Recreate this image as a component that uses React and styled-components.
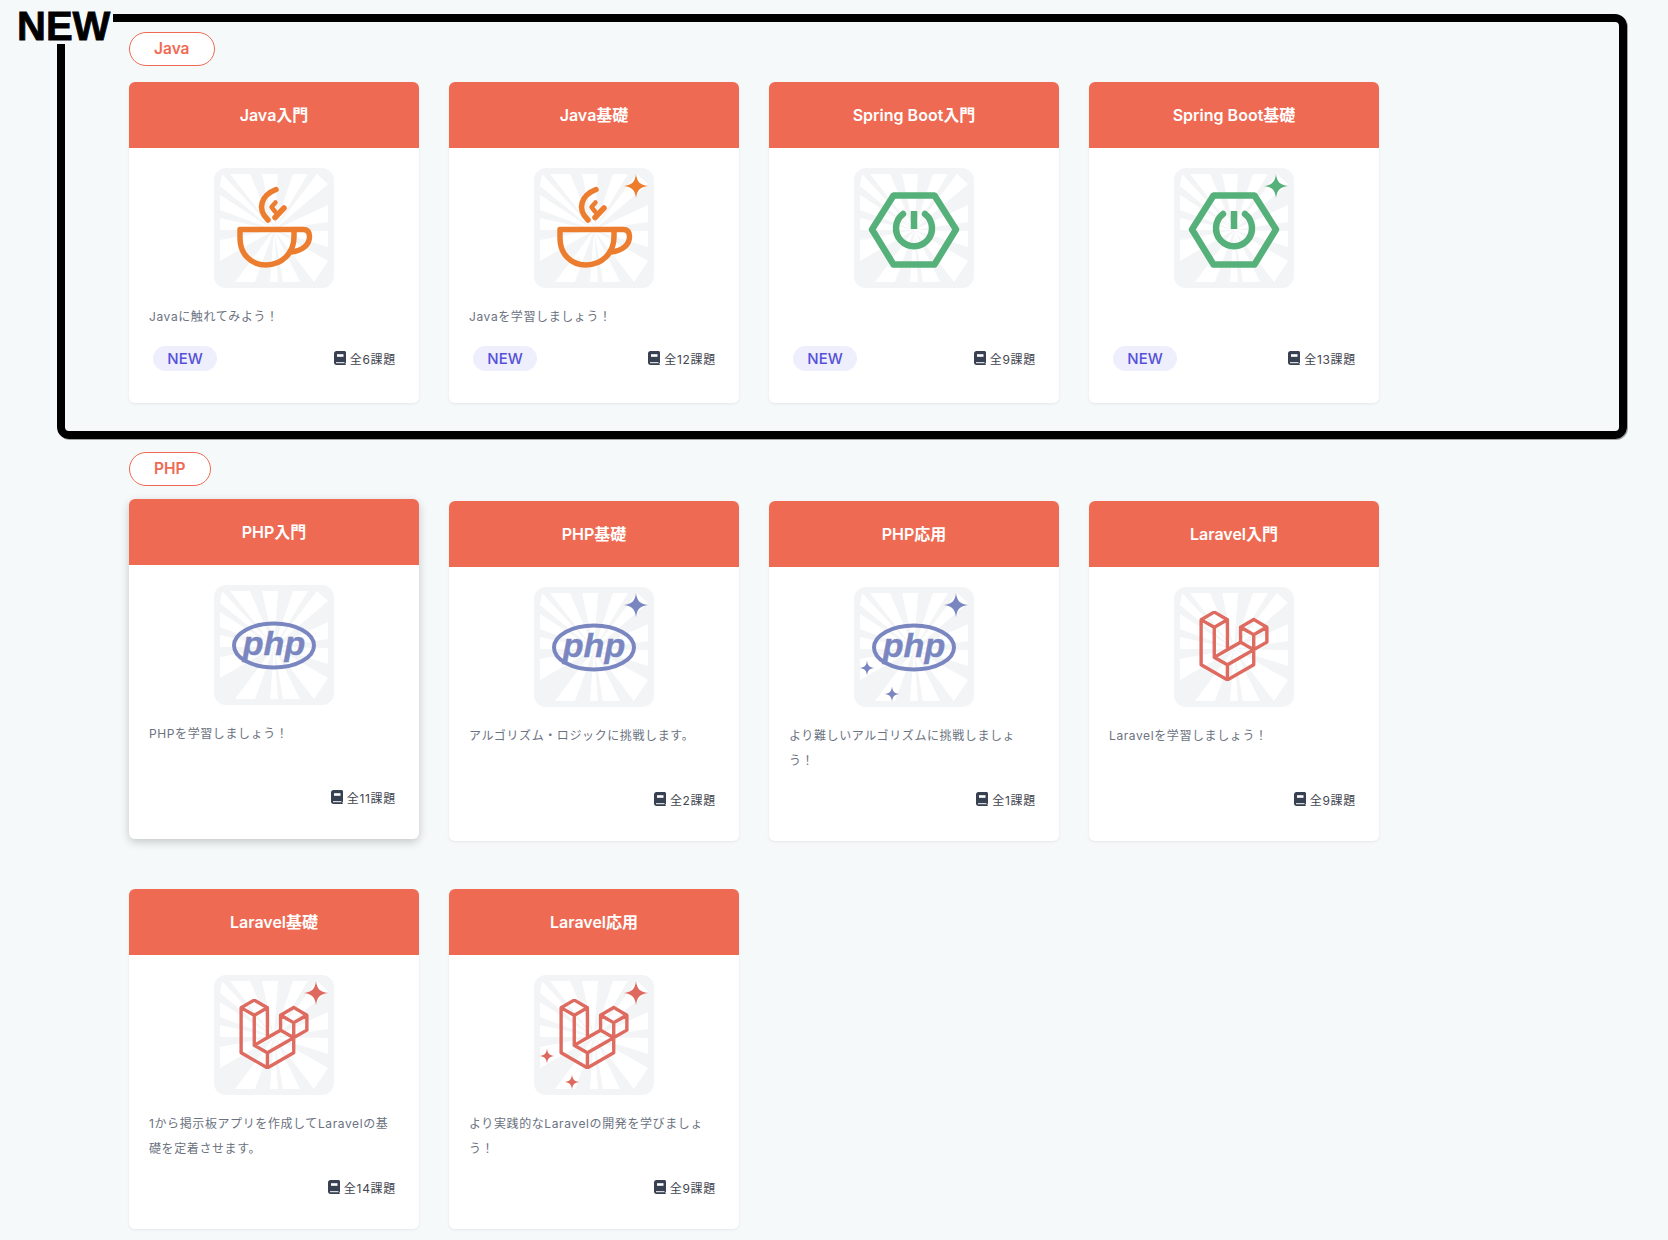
import React from 'react';
import styled, { createGlobalStyle } from 'styled-components';
import { SiLaravel } from 'react-icons/si';

const GlobalStyle = createGlobalStyle`
  body {
    margin: 0;
    background: #f5f9fa;
    font-family: Inter, "Noto Sans CJK JP", sans-serif;
  }
`;

const JAVA = '#ed7d2e';
const SPRING = '#55b07a';
const PHP = '#7a86c0';
const LARAVEL = '#de6a5f';

// white rays of the icon background: [x, y] pairs on the inner square edge
const RAYS = [
  [[16, 6], [36, 6]],
  [[48, 6], [64, 6]],
  [[79, 6], [94, 6]],
  [[103, 6], [114, 16]],
  [[114, 37], [114, 54]],
  [[114, 63], [114, 79]],
  [[114, 93], [100, 114]],
  [[86, 114], [69, 114]],
  [[64, 114], [56, 114]],
  [[41, 114], [21, 114]],
  [[6, 93], [6, 72]],
  [[6, 62], [6, 50]],
  [[6, 42], [6, 27]],
  [[6, 18], [8, 6]],
];

const Sparkle = ({ x, y, r }) => (
  <path
    transform={`translate(${x} ${y}) scale(${r / 12})`}
    d="M0-12C1-4 4-1 12 0 4 1 1 4 0 12-1 4-4 1-12 0-4-1-1-4 0-12Z"
  />
);

const JavaMark = () => (
  <g fill="none" stroke={JAVA} strokeWidth="5.500" strokeLinecap="round" strokeLinejoin="round">
    <path d="M26 61.500H80V68.500C80 85 68 97 52 97 36 97 26 85 26 70.500Z" />
    <path d="M80 61.500H89C94 61.500 95.500 64.500 95.500 68.500 95.500 77 88 83 76 84" />
    <path d="M62 21.500C48 27 42 40 54 52" />
    <path d="M61.500 34.500 57.500 39 61 43.500" strokeWidth="4.500" />
    <path d="M70 40 61 49.500" />
  </g>
);

const SpringMark = () => (
  <g fill="none" stroke={SPRING} strokeWidth="6.500" strokeLinejoin="round">
    <path d="M18 61.500 39.500 27.500H80.500L102 61.500 80.500 96.500H39.500Z" />
    <path d="M49 46A18 18 0 1 0 71 46" strokeLinecap="round" />
    <path d="M60 43V61" />
  </g>
);

const PhpMark = () => (
  <g>
    <ellipse cx="60" cy="60.500" rx="40" ry="22" fill="none" stroke={PHP} strokeWidth="4" />
    <LogoWord x="60" y="69.500" textAnchor="middle" fill={PHP} stroke={PHP} strokeWidth="0.4">
      php
    </LogoWord>
  </g>
);

const LaravelMark = () => (
  <SiLaravel x="25" y="24" size="70" color={LARAVEL} stroke={LARAVEL} strokeWidth="0.4" />
);

const MARKS = {
  java: { color: JAVA, Mark: JavaMark },
  spring: { color: SPRING, Mark: SpringMark },
  php: { color: PHP, Mark: PhpMark },
  laravel: { color: LARAVEL, Mark: LaravelMark },
};

const CourseIcon = ({ kind, sparkles, id }) => {
  const { color, Mark } = MARKS[kind];
  return (
    <IconArt viewBox="0 0 120 120">
      <clipPath id={id}>
        <rect x="6" y="6" width="108" height="108" rx="6" />
      </clipPath>
      <rect width="120" height="120" rx="12" fill="#f3f4f6" />
      <g clipPath={`url(#${id})`} fill="#fff">
        {RAYS.map(([a, b], i) => (
          <polygon key={i} points={`60,62 ${a[0]},${a[1]} ${b[0]},${b[1]}`} />
        ))}
      </g>
      <Mark />
      <g fill={color}>
        {sparkles > 0 && <Sparkle x={102} y={18} r={12} />}
        {sparkles > 1 && <Sparkle x={13} y={81} r={7.500} />}
        {sparkles > 1 && <Sparkle x={38} y={107} r={7.500} />}
      </g>
    </IconArt>
  );
};

const BookIcon = () => (
  <BookSvg viewBox="0 0 12 14">
    <path d="M2.500 0H10.500C11.300 0 12 .7 12 1.500V11.500C12 12 11.700 12.300 11.300 12.400V13.200H11.500C11.800 13.200 12 13.400 12 13.600 12 13.800 11.800 14 11.500 14H2.500C1.100 14 0 12.900 0 11.500V2.500C0 1.100 1.100 0 2.500 0Z" fill="#374151" />
    <rect x="3" y="3.200" width="6.500" height="2.600" fill="#fff" />
    <rect x="2" y="11.200" width="8.500" height="1" fill="#fff" />
  </BookSvg>
);

const Course = ({ course, id }) => (
  <Card $lifted={course.lifted}>
    <CardHeader>{course.title}</CardHeader>
    <CardBody>
      <IconBox>
        <CourseIcon kind={course.kind} sparkles={course.sparkles} id={id} />
      </IconBox>
      <Description>{course.text}</Description>
      <CardFooter>
        {course.isNew ? <NewBadge>NEW</NewBadge> : <span />}
        <Count>
          <BookIcon />
          {course.count}
        </Count>
      </CardFooter>
    </CardBody>
  </Card>
);

const javaCourses = [
  { title: 'Java入門', kind: 'java', sparkles: 0, text: 'Javaに触れてみよう！', count: '全6課題', isNew: true },
  { title: 'Java基礎', kind: 'java', sparkles: 1, text: 'Javaを学習しましょう！', count: '全12課題', isNew: true },
  { title: 'Spring Boot入門', kind: 'spring', sparkles: 0, text: '', count: '全9課題', isNew: true },
  { title: 'Spring Boot基礎', kind: 'spring', sparkles: 1, text: '', count: '全13課題', isNew: true },
];

const phpCourses = [
  { title: 'PHP入門', kind: 'php', sparkles: 0, text: 'PHPを学習しましょう！', count: '全11課題', lifted: true },
  { title: 'PHP基礎', kind: 'php', sparkles: 1, text: 'アルゴリズム・ロジックに挑戦します。', count: '全2課題' },
  { title: 'PHP応用', kind: 'php', sparkles: 3, text: 'より難しいアルゴリズムに挑戦しましょう！', count: '全1課題' },
  { title: 'Laravel入門', kind: 'laravel', sparkles: 0, text: 'Laravelを学習しましょう！', count: '全9課題' },
  { title: 'Laravel基礎', kind: 'laravel', sparkles: 1, text: '1から掲示板アプリを作成してLaravelの基礎を定着させます。', count: '全14課題' },
  { title: 'Laravel応用', kind: 'laravel', sparkles: 3, text: 'より実践的なLaravelの開発を学びましょう！', count: '全9課題' },
];

const App = () => (
  <Page>
    <GlobalStyle />
    <Highlight>
      <HighlightLabel>NEW</HighlightLabel>
      <CategoryPill>Java</CategoryPill>
      <CourseGrid>
        {javaCourses.map((c, i) => (
          <Course key={c.title} course={c} id={`java-${i}`} />
        ))}
      </CourseGrid>
    </Highlight>
    <Section>
      <CategoryPill $tight>PHP</CategoryPill>
      <CourseGrid>
        {phpCourses.map((c, i) => (
          <Course key={c.title} course={c} id={`php-${i}`} />
        ))}
      </CourseGrid>
    </Section>
  </Page>
);

const Page = styled.div`
  padding-top: 14px;
  min-height: 1226px;
  box-sizing: content-box;
`;

const Highlight = styled.section`
  position: relative;
  box-sizing: border-box;
  width: 1570px;
  margin-left: 57px;
  padding: 10px 0 28px 64px;
  border: 8px solid #000;
  border-radius: 12px;
  box-shadow: 1px 1px 0 rgba(0, 0, 0, 0.35);
`;

const HighlightLabel = styled.div`
  position: absolute;
  left: -51px;
  top: -14px;
  padding: 0 3px;
  background: #f5f9fa;
  color: #000;
  font-family: "Liberation Sans", Arial, sans-serif;
  font-size: 40px;
  font-weight: 700;
  line-height: 36px;
  -webkit-text-stroke: 0.8px #000;
  text-shadow: 0 0 2px #fff, 1px 1px 1px #fff, -1px -1px 1px #fff;
`;

const Section = styled.section`
  margin: 13px 0 0 129px;
`;

const CategoryPill = styled.div`
  display: inline-block;
  vertical-align: top;
  height: 34px;
  box-sizing: border-box;
  padding: 0 24px;
  margin-bottom: ${(p) => (p.$tight ? '15px' : '16px')};
  border: 1px solid #ef6a52;
  border-radius: 17px;
  background: #fff;
  color: #ef6a52;
  font-size: 15.500px;
  font-weight: 600;
  line-height: 32px;
`;

const CourseGrid = styled.div`
  display: grid;
  grid-template-columns: repeat(4, 290px);
  column-gap: 30px;
  row-gap: 48px;
`;

const Card = styled.article`
  display: flex;
  flex-direction: column;
  background: #fff;
  border-radius: 6px;
  overflow: hidden;
  box-shadow: ${(p) =>
    p.$lifted ? '0 3px 10px rgba(0, 0, 0, 0.2)' : '0 1px 3px rgba(0, 0, 0, 0.07)'};
  transform: ${(p) => (p.$lifted ? 'translateY(-2px)' : 'none')};
`;

const CardHeader = styled.h3`
  margin: 0;
  height: 66px;
  background: #ee6a53;
  color: #fff;
  font-size: 16px;
  font-weight: 600;
  line-height: 66px;
  text-align: center;
`;

const CardBody = styled.div`
  flex: 1;
  display: flex;
  flex-direction: column;
  padding: 20px 20px 32px;
`;

const IconBox = styled.div`
  width: 120px;
  height: 120px;
  margin: 0 auto;
`;

const IconArt = styled.svg`
  display: block;
  width: 120px;
  height: 120px;
`;

const LogoWord = styled.text`
  font-family: "Liberation Sans", Arial, sans-serif;
  font-size: 34px;
  font-style: italic;
  font-weight: 700;
`;

const Description = styled.p`
  margin: 16px 0 0;
  max-width: 240px;
  min-height: 25.500px;
  color: #6b7280;
  font-size: 12px;
  letter-spacing: 0.6px;
  line-height: 25.500px;
`;

const CardFooter = styled.div`
  display: flex;
  align-items: center;
  justify-content: space-between;
  margin-top: auto;
  padding: 16px 4px 0;
`;

const NewBadge = styled.span`
  width: 64px;
  height: 25px;
  border-radius: 13px;
  background: #eeeefc;
  color: #5551d8;
  font-size: 15px;
  font-weight: 500;
  line-height: 25px;
  text-align: center;
`;

const Count = styled.span`
  display: inline-flex;
  align-items: center;
  gap: 4px;
  height: 19px;
  margin-right: -1px;
  color: #3f4650;
  font-size: 12px;
  letter-spacing: 0.7px;
`;

const BookSvg = styled.svg`
  width: 12px;
  height: 14px;
`;

export default App;
